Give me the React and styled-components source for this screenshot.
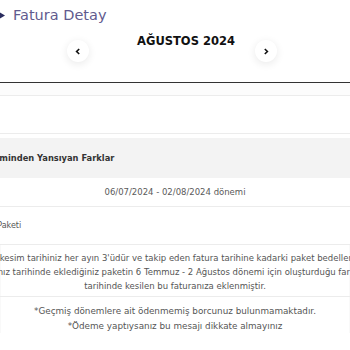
import React from "react";
import styled, { createGlobalStyle } from "styled-components";

const GlobalStyle = createGlobalStyle`
  html, body {
    margin: 0;
    padding: 0;
    background: #fff;
    overflow: hidden;
  }
  body {
    font-family: "DejaVu Sans", "Open Sans", sans-serif;
  }
`;

const Page = styled.div`
  width: 350px;
  height: 350px;
  overflow: hidden;
  background: #fff;
  color: #5a5a5a;
`;

const Header = styled.div`
  display: flex;
  align-items: center;
  gap: 8px;
  height: 30px;
  margin-left: -4px;
`;

const HeaderTitle = styled.h1`
  margin: 0;
  font-size: 14.5px;
  font-weight: 400;
  color: #615a8e;
`;

const MonthBlock = styled.div`
  height: 52px;
  padding-top: 3px;
  box-sizing: border-box;
`;

const MonthTitle = styled.h2`
  margin: 0;
  padding-left: 22px;
  text-align: center;
  font-size: 11.5px;
  font-weight: 700;
  color: #111;
  line-height: 16px;
`;

const Nav = styled.div`
  display: flex;
  justify-content: space-between;
  padding: 0 73px 0 67px;
  margin-top: -9px;
`;

const NavButton = styled.button`
  width: 22px;
  height: 22px;
  border: none;
  border-radius: 50%;
  background: #fff;
  box-shadow: 0 2px 9px rgba(0, 0, 0, 0.09);
  display: flex;
  align-items: center;
  justify-content: center;
  padding: 0;
`;

const Table = styled.div`
  border-top: 1px solid #333;
  box-shadow: inset 0 1px 1px rgba(0, 0, 0, 0.25);
  display: flex;
  flex-direction: column;
`;

const Row = styled.div`
  height: ${(p) => p.$h}px;
  background: ${(p) => p.$bg || "#fff"};
  border-bottom: ${(p) => (p.$line ? "1px solid #ececec" : "none")};
  display: flex;
  align-items: center;
  justify-content: ${(p) => (p.$center ? "center" : "flex-start")};
  font-size: 8.5px;
  white-space: nowrap;
`;

const GroupLabel = styled.span`
  margin-left: -59px;
  font-size: 8.3px;
  font-weight: 700;
  color: #333;
`;

const ItemLabel = styled.span`
  margin-left: -15px;
  font-size: 8px;
  color: #555;
`;

const Paragraph = styled.div`
  height: 52px;
  border-bottom: 1px solid #ececec;
  padding-top: 6px;
  box-sizing: border-box;
  display: flex;
  flex-direction: column;
  align-items: center;
  font-size: 8.5px;
  line-height: 14px;
  white-space: nowrap;
  color: #555;
`;

const Notes = styled.div`
  padding-top: 7px;
  display: flex;
  flex-direction: column;
  align-items: center;
  font-size: 8.8px;
  line-height: 14.5px;
  white-space: nowrap;
  color: #555;
`;

const Chevron = ({ dir }) => (
  <svg width="6" height="7" viewBox="0 0 6 7">
    <path
      d={dir === "left" ? "M4.2 1 L1.6 3.5 L4.2 6" : "M1.8 1 L4.4 3.5 L1.8 6"}
      fill="none"
      stroke="#111"
      strokeWidth="1.6"
    />
  </svg>
);

export default function App() {
  return (
    <Page>
      <GlobalStyle />
      <Header>
        <svg width="9" height="11" viewBox="0 0 9 11">
          <path d="M0 0 L9 5.5 L0 11 Z" fill="#2a2c5e" />
        </svg>
        <HeaderTitle>Fatura Detay</HeaderTitle>
      </Header>
      <MonthBlock>
        <MonthTitle>AĞUSTOS 2024</MonthTitle>
        <Nav>
          <NavButton>
            <Chevron dir="left" />
          </NavButton>
          <NavButton>
            <Chevron dir="right" />
          </NavButton>
        </Nav>
      </MonthBlock>
      <Table>
        <Row $h={12} $bg="#fcfcfc" $line />
        <Row $h={37} $line />
        <Row $h={4} />
        <Row $h={40} $bg="#f3f3f3">
          <GroupLabel>Paket Değişiminden Yansıyan Farklar</GroupLabel>
        </Row>
        <Row $h={28} $center $line>
          06/07/2024 - 02/08/2024 dönemi
        </Row>
        <Row $h={37} $line>
          <ItemLabel>Ek Paketi</ItemLabel>
        </Row>
        <Paragraph>
          <span>Fatura kesim tarihiniz her ayın 3'üdür ve takip eden fatura tarihine kadarki paket bedelleri peşin</span>
          <span>Satın aldığınız tarihinde eklediğiniz paketin 6 Temmuz - 2 Ağustos dönemi için oluşturduğu fark 3 Ağustos</span>
          <span>tarihinde kesilen bu faturanıza eklenmiştir.</span>
        </Paragraph>
        <Notes>
          <span>*Geçmiş dönemlere ait ödenmemiş borcunuz bulunmamaktadır.</span>
          <span>*Ödeme yaptıysanız bu mesajı dikkate almayınız</span>
        </Notes>
      </Table>
    </Page>
  );
}
